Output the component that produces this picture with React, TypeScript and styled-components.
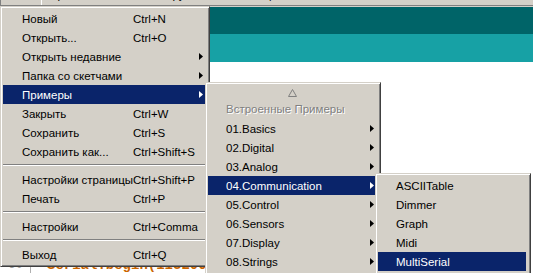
import React from "react";
import styled, { createGlobalStyle } from "styled-components";

const GlobalStyle = createGlobalStyle`
  html, body {
    margin: 0;
    padding: 0;
    width: 533px;
    height: 273px;
    overflow: hidden;
    background: #ffffff;
  }
  body {
    font-family: "Liberation Sans", Arial, sans-serif;
    font-size: 11.5px;
  }
`;

const Window = styled.div`
  position: relative;
  width: 533px;
  height: 273px;
  display: flex;
  flex-direction: column;
  overflow: hidden;
`;

/* menu bar, mostly scrolled out of the shot */
const MenuBar = styled.div`
  height: 6px;
  background: #d4d0c8;
  border-bottom: 1px solid #808080;
  display: flex;
  overflow: hidden;
`;

const MenuBarItem = styled.div<{ $pressed?: boolean }>`
  margin-top: -12px;
  height: 16px;
  line-height: 13px;
  padding: 0 6px;
  color: #000;
  white-space: nowrap;
  border: 1px solid transparent;
  border-color: ${(p) =>
    p.$pressed ? "#808080 #ffffff #ffffff #808080" : "transparent"};
`;

const HeaderDark = styled.div`
  height: 32px;
  border-top: 1px solid #d4d0c8;
  background: #006468;
`;

const HeaderLight = styled.div`
  height: 33px;
  background: #17a1a5;
`;

const Editor = styled.div`
  flex: 1;
  background: #ffffff;
  display: flex;
  flex-direction: column;
  padding-top: 195px;
`;

const CodeRow = styled.div`
  display: flex;
  height: 16px;
  line-height: 16px;
`;

const Gutter = styled.div`
  width: 23px;
  padding-right: 7px;
  text-align: right;
  color: #a0a0a0;
  font-family: "Liberation Mono", monospace;
  font-size: 12px;
  border-right: 1px solid #b0b0b0;
`;

const Code = styled.div`
  padding-left: 16px;
  font-family: "Liberation Mono", monospace;
  font-size: 14px;
  font-weight: bold;
  color: #cc6600;
  white-space: pre;
`;

/* popup menus */
const Popup = styled.div<{ $left: number; $top: number; $width: number }>`
  position: absolute;
  left: ${(p) => p.$left}px;
  top: ${(p) => p.$top}px;
  width: ${(p) => p.$width}px;
  box-sizing: border-box;
  background: #d4d0c8;
  border: 1px solid;
  border-color: #d4d0c8 #404040 #404040 #d4d0c8;
  box-shadow: inset 1px 1px #ffffff, inset -1px -1px #808080;
  padding: 2px 4px 2px 2px;
  display: flex;
  flex-direction: column;
`;

const Item = styled.div<{ $active?: boolean; $indent: number; $cols: string }>`
  display: grid;
  grid-template-columns: ${(p) => p.$cols};
  align-items: center;
  height: 19px;
  padding: 0 2px 0 ${(p) => p.$indent}px;
  background: ${(p) => (p.$active ? "#0a246a" : "transparent")};
  color: ${(p) => (p.$active ? "#ffffff" : "#000000")};
  white-space: nowrap;
`;

const Disabled = styled.div<{ $indent: number }>`
  height: 19px;
  line-height: 19px;
  padding-left: ${(p) => p.$indent}px;
  color: #808080;
  text-shadow: 1px 1px #ffffff;
  white-space: nowrap;
`;

const ScrollRow = styled.div`
  height: 15px;
  display: flex;
  align-items: center;
  justify-content: center;
`;

const Separator = styled.div`
  height: 9px;
  display: flex;
  flex-direction: column;
  padding-top: 3px;
  box-sizing: border-box;
  &::before {
    content: "";
    height: 1px;
    background: #808080;
  }
  &::after {
    content: "";
    height: 1px;
    background: #ffffff;
  }
`;

const Arrow = () => (
  <svg width="4" height="7" viewBox="0 0 4 7">
    <polygon points="0,0 4,3.5 0,7" fill="currentColor" />
  </svg>
);

type Entry =
  | { sep: true }
  | { label: string; sc?: string; sub?: boolean; active?: boolean };

const fileMenu: Entry[] = [
  { label: "Новый", sc: "Ctrl+N" },
  { label: "Открыть...", sc: "Ctrl+O" },
  { label: "Открыть недавние", sub: true },
  { label: "Папка со скетчами", sub: true },
  { label: "Примеры", sub: true, active: true },
  { label: "Закрыть", sc: "Ctrl+W" },
  { label: "Сохранить", sc: "Ctrl+S" },
  { label: "Сохранить как...", sc: "Ctrl+Shift+S" },
  { sep: true },
  { label: "Настройки страницы", sc: "Ctrl+Shift+P" },
  { label: "Печать", sc: "Ctrl+P" },
  { sep: true },
  { label: "Настройки", sc: "Ctrl+Comma" },
  { sep: true },
  { label: "Выход", sc: "Ctrl+Q" },
];

const examples = [
  "01.Basics",
  "02.Digital",
  "03.Analog",
  "04.Communication",
  "05.Control",
  "06.Sensors",
  "07.Display",
  "08.Strings",
  "09.USB",
  "10.StarterKit_BasicKit",
];

const communication = [
  "ASCIITable",
  "Dimmer",
  "Graph",
  "Midi",
  "MultiSerial",
  "PhysicalPixel",
  "ReadASCIIString",
];

export default function App() {
  return (
    <>
      <GlobalStyle />
      <Window>
        <MenuBar>
          <MenuBarItem $pressed>Файл</MenuBarItem>
          <MenuBarItem>Правка</MenuBarItem>
          <MenuBarItem>Скетч</MenuBarItem>
          <MenuBarItem>Инструменты</MenuBarItem>
          <MenuBarItem>Помощь</MenuBarItem>
        </MenuBar>
        <HeaderDark />
        <HeaderLight />
        <Editor>
          <CodeRow>
            <Gutter>50</Gutter>
            <Code>Serial.begin(115200);</Code>
          </CodeRow>
        </Editor>

        <Popup $left={0} $top={6} $width={210}>
          {fileMenu.map((e, i) =>
            "sep" in e ? (
              <Separator key={i} />
            ) : (
              <Item key={i} $indent={19} $cols="111px 1fr 4px" $active={e.active}>
                <span>{e.label}</span>
                <span>{e.sc}</span>
                {e.sub ? <Arrow /> : <span />}
              </Item>
            )
          )}
        </Popup>

        <Popup $left={205} $top={82} $width={176}>
          <ScrollRow>
            <svg width="9" height="8" viewBox="0 0 9 8">
              <polygon
                points="4.5,0.5 8.5,7.5 0.5,7.5"
                fill="none"
                stroke="#808080"
                strokeWidth="1"
              />
            </svg>
          </ScrollRow>
          <Disabled $indent={18}>Встроенные Примеры</Disabled>
          {examples.map((name) => (
            <Item
              key={name}
              $indent={18}
              $cols="1fr 4px"
              $active={name === "04.Communication"}
            >
              <span>{name}</span>
              <Arrow />
            </Item>
          ))}
        </Popup>

        <Popup $left={375} $top={173} $width={156}>
          {communication.map((name) => (
            <Item
              key={name}
              $indent={18}
              $cols="1fr"
              $active={name === "MultiSerial"}
            >
              <span>{name}</span>
            </Item>
          ))}
        </Popup>
      </Window>
    </>
  );
}
